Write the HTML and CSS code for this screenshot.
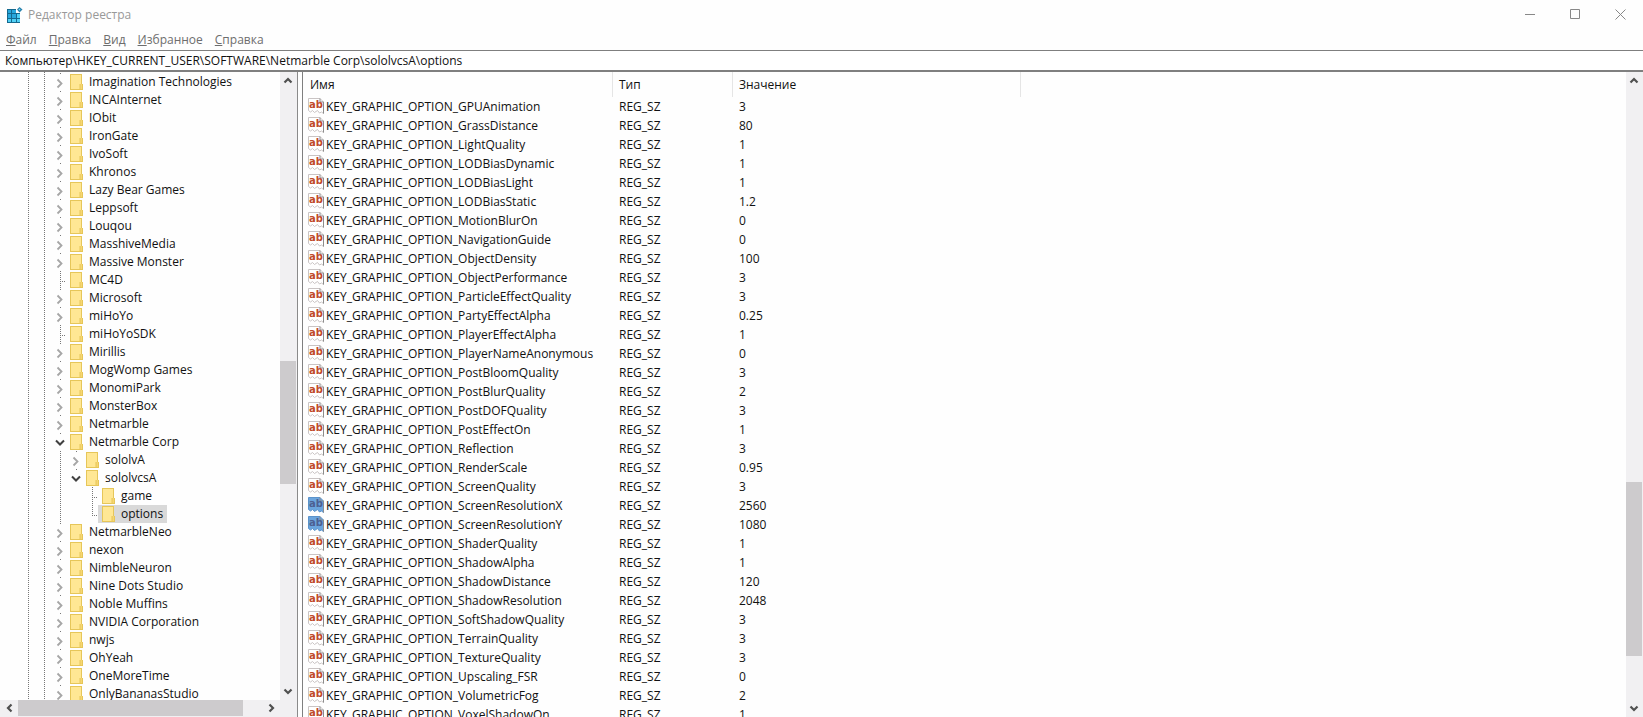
FILE: index.html
```html
<!DOCTYPE html>
<html lang="ru">
<head>
    <meta charset="UTF-8">
    <meta name="viewport" content="width=device-width, initial-scale=1.0">
    <title>Редактор реестра</title>
    <link rel="stylesheet" href="styles.css">
</head>
<body>
<svg class="symbols" aria-hidden="true">
    <symbol id="folder" viewBox="0 0 13 16">
        <path d="M0 0h12v10h1v6H0z" fill="#e6c659"/>
        <path d="M1 1h10v14H1z" fill="#ffe794"/>
        <path d="M10 10h2v5h-2z" fill="#f6d673"/>
        <path d="M10 10v5" stroke="#e6c659"/>
    </symbol>
    <symbol id="right" viewBox="0 0 12 18">
        <path d="M3.500 6.500l4 4-4 4" fill="none" stroke="#a6a6a6" stroke-width="1.800"/>
    </symbol>
    <symbol id="down" viewBox="0 0 12 18">
        <path d="M2 7.500l4 4 4-4" fill="none" stroke="#404040" stroke-width="2"/>
    </symbol>
    <symbol id="arrow" viewBox="0 0 16 17">
        <path d="M4.500 10.500L8 7l3.500 3.500" fill="none" stroke="#505050" stroke-width="2.200"/>
    </symbol>
    <symbol id="string" viewBox="0 0 16 16">
        <path class="page" d="M.5.500h11.500l3.500 3.500v11.500l-2-1.500-2 1-2-2.500-3 2-2-2-2 1.500-2-1.500z"/>
        <path class="fold" d="M12 .5v3.500h3.500v11.500"/>
        <text x="8" y="10" text-anchor="middle">ab</text>
    </symbol>
</svg>

<header>
    <div class="titlebar">
        <svg class="logo" viewBox="0 0 16 16" aria-hidden="true">
            <path d="M0 2h9v4h4v10H0z" fill="#14698f"/>
            <path d="M1 3h3v3H1zM5 3h4v3H5zM1 7h3v4H1zM5 7h4v4H5z" fill="#28a8dd"/>
            <path d="M10 7h3v4h-3zM1 12h3v3H1zM5 12h4v3H5zM10 12h3v3h-3z" fill="#50d0f5"/>
            <path d="M12.500 0l3 2.500-3 3-2.500-3z" fill="#2781ac"/>
            <path d="M12.500 1.500l1 1-1 1-1-1z" fill="#7bdcf7"/>
        </svg>
        <span class="title">Редактор реестра</span>
        <div class="window-buttons">
            <button type="button" aria-label="Свернуть"><svg viewBox="0 0 11 11"><path d="M0 5.500h10"/></svg></button>
            <button type="button" aria-label="Развернуть"><svg viewBox="0 0 11 11"><path d="M.5.500h9v9h-9z"/></svg></button>
            <button type="button" aria-label="Закрыть"><svg viewBox="0 0 11 11"><path d="M.5.500l10 10M10.500.500l-10 10"/></svg></button>
        </div>
    </div>
    <nav class="menu">
        <button type="button"><u>Ф</u>айл</button>
        <button type="button"><u>П</u>равка</button>
        <button type="button"><u>В</u>ид</button>
        <button type="button"><u>И</u>збранное</button>
        <button type="button"><u>С</u>правка</button>
    </nav>
    <input class="address" type="text" aria-label="Адрес" value="Компьютер\HKEY_CURRENT_USER\SOFTWARE\Netmarble Corp\sololvcsA\options">
</header>

<main>
    <aside>
        <div class="tree-area">
            <ul class="tree">
                <li><div class="row"><button class="toggle" aria-label="Развернуть"><svg><use href="#right"/></svg></button><span class="key"><svg><use href="#folder"/></svg>Imagination Technologies</span></div></li>
                <li><div class="row"><button class="toggle" aria-label="Развернуть"><svg><use href="#right"/></svg></button><span class="key"><svg><use href="#folder"/></svg>INCAInternet</span></div></li>
                <li><div class="row"><button class="toggle" aria-label="Развернуть"><svg><use href="#right"/></svg></button><span class="key"><svg><use href="#folder"/></svg>IObit</span></div></li>
                <li><div class="row"><button class="toggle" aria-label="Развернуть"><svg><use href="#right"/></svg></button><span class="key"><svg><use href="#folder"/></svg>IronGate</span></div></li>
                <li><div class="row"><button class="toggle" aria-label="Развернуть"><svg><use href="#right"/></svg></button><span class="key"><svg><use href="#folder"/></svg>IvoSoft</span></div></li>
                <li><div class="row"><button class="toggle" aria-label="Развернуть"><svg><use href="#right"/></svg></button><span class="key"><svg><use href="#folder"/></svg>Khronos</span></div></li>
                <li><div class="row"><button class="toggle" aria-label="Развернуть"><svg><use href="#right"/></svg></button><span class="key"><svg><use href="#folder"/></svg>Lazy Bear Games</span></div></li>
                <li><div class="row"><button class="toggle" aria-label="Развернуть"><svg><use href="#right"/></svg></button><span class="key"><svg><use href="#folder"/></svg>Leppsoft</span></div></li>
                <li><div class="row"><button class="toggle" aria-label="Развернуть"><svg><use href="#right"/></svg></button><span class="key"><svg><use href="#folder"/></svg>Louqou</span></div></li>
                <li><div class="row"><button class="toggle" aria-label="Развернуть"><svg><use href="#right"/></svg></button><span class="key"><svg><use href="#folder"/></svg>MasshiveMedia</span></div></li>
                <li><div class="row"><button class="toggle" aria-label="Развернуть"><svg><use href="#right"/></svg></button><span class="key"><svg><use href="#folder"/></svg>Massive Monster</span></div></li>
                <li><div class="row"><span class="leaf"></span><span class="key"><svg><use href="#folder"/></svg>MC4D</span></div></li>
                <li><div class="row"><button class="toggle" aria-label="Развернуть"><svg><use href="#right"/></svg></button><span class="key"><svg><use href="#folder"/></svg>Microsoft</span></div></li>
                <li><div class="row"><button class="toggle" aria-label="Развернуть"><svg><use href="#right"/></svg></button><span class="key"><svg><use href="#folder"/></svg>miHoYo</span></div></li>
                <li><div class="row"><span class="leaf"></span><span class="key"><svg><use href="#folder"/></svg>miHoYoSDK</span></div></li>
                <li><div class="row"><button class="toggle" aria-label="Развернуть"><svg><use href="#right"/></svg></button><span class="key"><svg><use href="#folder"/></svg>Mirillis</span></div></li>
                <li><div class="row"><button class="toggle" aria-label="Развернуть"><svg><use href="#right"/></svg></button><span class="key"><svg><use href="#folder"/></svg>MogWomp Games</span></div></li>
                <li><div class="row"><button class="toggle" aria-label="Развернуть"><svg><use href="#right"/></svg></button><span class="key"><svg><use href="#folder"/></svg>MonomiPark</span></div></li>
                <li><div class="row"><button class="toggle" aria-label="Развернуть"><svg><use href="#right"/></svg></button><span class="key"><svg><use href="#folder"/></svg>MonsterBox</span></div></li>
                <li><div class="row"><button class="toggle" aria-label="Развернуть"><svg><use href="#right"/></svg></button><span class="key"><svg><use href="#folder"/></svg>Netmarble</span></div></li>
                <li>
                    <div class="row"><button class="toggle" aria-label="Свернуть"><svg><use href="#down"/></svg></button><span class="key"><svg><use href="#folder"/></svg>Netmarble Corp</span></div>
                    <ul class="line">
                        <li><div class="row"><button class="toggle" aria-label="Развернуть"><svg><use href="#right"/></svg></button><span class="key"><svg><use href="#folder"/></svg>sololvA</span></div></li>
                        <li>
                            <div class="row"><button class="toggle" aria-label="Свернуть"><svg><use href="#down"/></svg></button><span class="key"><svg><use href="#folder"/></svg>sololvcsA</span></div>
                            <ul>
                                <li><div class="row"><span class="leaf"></span><span class="key"><svg><use href="#folder"/></svg>game</span></div></li>
                                <li><div class="row"><span class="leaf last"></span><span class="key selected"><svg><use href="#folder"/></svg>options</span></div></li>
                            </ul>
                        </li>
                    </ul>
                </li>
                <li><div class="row"><button class="toggle" aria-label="Развернуть"><svg><use href="#right"/></svg></button><span class="key"><svg><use href="#folder"/></svg>NetmarbleNeo</span></div></li>
                <li><div class="row"><button class="toggle" aria-label="Развернуть"><svg><use href="#right"/></svg></button><span class="key"><svg><use href="#folder"/></svg>nexon</span></div></li>
                <li><div class="row"><button class="toggle" aria-label="Развернуть"><svg><use href="#right"/></svg></button><span class="key"><svg><use href="#folder"/></svg>NimbleNeuron</span></div></li>
                <li><div class="row"><button class="toggle" aria-label="Развернуть"><svg><use href="#right"/></svg></button><span class="key"><svg><use href="#folder"/></svg>Nine Dots Studio</span></div></li>
                <li><div class="row"><button class="toggle" aria-label="Развернуть"><svg><use href="#right"/></svg></button><span class="key"><svg><use href="#folder"/></svg>Noble Muffins</span></div></li>
                <li><div class="row"><button class="toggle" aria-label="Развернуть"><svg><use href="#right"/></svg></button><span class="key"><svg><use href="#folder"/></svg>NVIDIA Corporation</span></div></li>
                <li><div class="row"><button class="toggle" aria-label="Развернуть"><svg><use href="#right"/></svg></button><span class="key"><svg><use href="#folder"/></svg>nwjs</span></div></li>
                <li><div class="row"><button class="toggle" aria-label="Развернуть"><svg><use href="#right"/></svg></button><span class="key"><svg><use href="#folder"/></svg>OhYeah</span></div></li>
                <li><div class="row"><button class="toggle" aria-label="Развернуть"><svg><use href="#right"/></svg></button><span class="key"><svg><use href="#folder"/></svg>OneMoreTime</span></div></li>
                <li><div class="row"><button class="toggle" aria-label="Развернуть"><svg><use href="#right"/></svg></button><span class="key"><svg><use href="#folder"/></svg>OnlyBananasStudio</span></div></li>
            </ul>
            <div class="scrollbar tree-scroll">
                <button type="button" aria-label="Вверх"><svg><use href="#arrow"/></svg></button>
                <div class="before"></div>
                <div class="thumb"></div>
                <div class="after"></div>
                <button type="button" class="to-down" aria-label="Вниз"><svg><use href="#arrow"/></svg></button>
            </div>
        </div>
        <div class="scrollbar horizontal">
            <button type="button" class="to-left" aria-label="Влево"><svg><use href="#arrow"/></svg></button>
            <div class="before"></div>
            <div class="thumb"></div>
            <div class="after"></div>
            <button type="button" class="to-right" aria-label="Вправо"><svg><use href="#arrow"/></svg></button>
        </div>
    </aside>

    <section class="values">
        <div class="list">
            <table>
                <thead>
                    <tr><th class="name">Имя</th><th class="type">Тип</th><th class="data">Значение</th><th></th></tr>
                </thead>
                <tbody>
                    <tr><td><svg><use href="#string"/></svg>KEY_GRAPHIC_OPTION_GPUAnimation</td><td>REG_SZ</td><td>3</td></tr>
                    <tr><td><svg><use href="#string"/></svg>KEY_GRAPHIC_OPTION_GrassDistance</td><td>REG_SZ</td><td>80</td></tr>
                    <tr><td><svg><use href="#string"/></svg>KEY_GRAPHIC_OPTION_LightQuality</td><td>REG_SZ</td><td>1</td></tr>
                    <tr><td><svg><use href="#string"/></svg>KEY_GRAPHIC_OPTION_LODBiasDynamic</td><td>REG_SZ</td><td>1</td></tr>
                    <tr><td><svg><use href="#string"/></svg>KEY_GRAPHIC_OPTION_LODBiasLight</td><td>REG_SZ</td><td>1</td></tr>
                    <tr><td><svg><use href="#string"/></svg>KEY_GRAPHIC_OPTION_LODBiasStatic</td><td>REG_SZ</td><td>1.2</td></tr>
                    <tr><td><svg><use href="#string"/></svg>KEY_GRAPHIC_OPTION_MotionBlurOn</td><td>REG_SZ</td><td>0</td></tr>
                    <tr><td><svg><use href="#string"/></svg>KEY_GRAPHIC_OPTION_NavigationGuide</td><td>REG_SZ</td><td>0</td></tr>
                    <tr><td><svg><use href="#string"/></svg>KEY_GRAPHIC_OPTION_ObjectDensity</td><td>REG_SZ</td><td>100</td></tr>
                    <tr><td><svg><use href="#string"/></svg>KEY_GRAPHIC_OPTION_ObjectPerformance</td><td>REG_SZ</td><td>3</td></tr>
                    <tr><td><svg><use href="#string"/></svg>KEY_GRAPHIC_OPTION_ParticleEffectQuality</td><td>REG_SZ</td><td>3</td></tr>
                    <tr><td><svg><use href="#string"/></svg>KEY_GRAPHIC_OPTION_PartyEffectAlpha</td><td>REG_SZ</td><td>0.25</td></tr>
                    <tr><td><svg><use href="#string"/></svg>KEY_GRAPHIC_OPTION_PlayerEffectAlpha</td><td>REG_SZ</td><td>1</td></tr>
                    <tr><td><svg><use href="#string"/></svg>KEY_GRAPHIC_OPTION_PlayerNameAnonymous</td><td>REG_SZ</td><td>0</td></tr>
                    <tr><td><svg><use href="#string"/></svg>KEY_GRAPHIC_OPTION_PostBloomQuality</td><td>REG_SZ</td><td>3</td></tr>
                    <tr><td><svg><use href="#string"/></svg>KEY_GRAPHIC_OPTION_PostBlurQuality</td><td>REG_SZ</td><td>2</td></tr>
                    <tr><td><svg><use href="#string"/></svg>KEY_GRAPHIC_OPTION_PostDOFQuality</td><td>REG_SZ</td><td>3</td></tr>
                    <tr><td><svg><use href="#string"/></svg>KEY_GRAPHIC_OPTION_PostEffectOn</td><td>REG_SZ</td><td>1</td></tr>
                    <tr><td><svg><use href="#string"/></svg>KEY_GRAPHIC_OPTION_Reflection</td><td>REG_SZ</td><td>3</td></tr>
                    <tr><td><svg><use href="#string"/></svg>KEY_GRAPHIC_OPTION_RenderScale</td><td>REG_SZ</td><td>0.95</td></tr>
                    <tr><td><svg><use href="#string"/></svg>KEY_GRAPHIC_OPTION_ScreenQuality</td><td>REG_SZ</td><td>3</td></tr>
                    <tr class="marked"><td><svg><use href="#string"/></svg>KEY_GRAPHIC_OPTION_ScreenResolutionX</td><td>REG_SZ</td><td>2560</td></tr>
                    <tr class="marked"><td><svg><use href="#string"/></svg>KEY_GRAPHIC_OPTION_ScreenResolutionY</td><td>REG_SZ</td><td>1080</td></tr>
                    <tr><td><svg><use href="#string"/></svg>KEY_GRAPHIC_OPTION_ShaderQuality</td><td>REG_SZ</td><td>1</td></tr>
                    <tr><td><svg><use href="#string"/></svg>KEY_GRAPHIC_OPTION_ShadowAlpha</td><td>REG_SZ</td><td>1</td></tr>
                    <tr><td><svg><use href="#string"/></svg>KEY_GRAPHIC_OPTION_ShadowDistance</td><td>REG_SZ</td><td>120</td></tr>
                    <tr><td><svg><use href="#string"/></svg>KEY_GRAPHIC_OPTION_ShadowResolution</td><td>REG_SZ</td><td>2048</td></tr>
                    <tr><td><svg><use href="#string"/></svg>KEY_GRAPHIC_OPTION_SoftShadowQuality</td><td>REG_SZ</td><td>3</td></tr>
                    <tr><td><svg><use href="#string"/></svg>KEY_GRAPHIC_OPTION_TerrainQuality</td><td>REG_SZ</td><td>3</td></tr>
                    <tr><td><svg><use href="#string"/></svg>KEY_GRAPHIC_OPTION_TextureQuality</td><td>REG_SZ</td><td>3</td></tr>
                    <tr><td><svg><use href="#string"/></svg>KEY_GRAPHIC_OPTION_Upscaling_FSR</td><td>REG_SZ</td><td>0</td></tr>
                    <tr><td><svg><use href="#string"/></svg>KEY_GRAPHIC_OPTION_VolumetricFog</td><td>REG_SZ</td><td>2</td></tr>
                    <tr><td><svg><use href="#string"/></svg>KEY_GRAPHIC_OPTION_VoxelShadowOn</td><td>REG_SZ</td><td>1</td></tr>
                </tbody>
            </table>
        </div>
        <div class="scrollbar list-scroll">
            <button type="button" aria-label="Вверх"><svg><use href="#arrow"/></svg></button>
            <div class="before"></div>
            <div class="thumb"></div>
            <div class="after"></div>
            <button type="button" class="to-down" aria-label="Вниз"><svg><use href="#arrow"/></svg></button>
        </div>
    </section>
</main>
</body>
</html>
```

FILE: styles.css
```css
* {
    box-sizing: border-box;
}
body {
    margin: 0;
    height: 100vh;
    display: flex;
    flex-direction: column;
    overflow: hidden;
    background-color: #fefefe;
    color: #111;
    font-family: "Open Sans", "Segoe UI", sans-serif;
    font-size: 12px;
}
button {
    padding: 0;
    border: none;
    background: none;
    font: inherit;
    color: inherit;
}
svg {
    display: block;
    flex: none;
}
.symbols {
    display: none;
}

/* window header */
.titlebar {
    display: flex;
    align-items: center;
    height: 29px;
    padding-left: 7px;
    color: #999;
}
.logo {
    width: 16px;
    height: 16px;
}
.title {
    margin-left: 5px;
}
.window-buttons {
    display: flex;
    margin-left: auto;
}
.window-buttons button {
    display: flex;
    justify-content: center;
    width: 45px;
}
.window-buttons svg {
    width: 11px;
    height: 11px;
    fill: none;
    stroke: #888;
}
.menu {
    display: flex;
    align-items: flex-start;
    gap: 12px;
    height: 21px;
    padding: 2px 0 0 6px;
    color: #6d6d6d;
}
.address {
    display: block;
    width: 100%;
    height: 22px;
    padding: 0 5px;
    border: solid #7f7f7f;
    border-width: 1px 0 2px;
    background-color: #fff;
    color: #111;
    font: inherit;
}

main {
    display: flex;
    flex: 1;
    min-height: 0;
}

/* key tree */
aside {
    display: flex;
    flex-direction: column;
    width: 298px;
    border-right: 1px solid #8a8a8a;
}
.tree-area {
    display: flex;
    flex: 1;
    min-height: 0;
}
ul {
    margin: 0;
    padding: 0 0 0 16px;
    list-style: none;
}
.tree {
    flex: 1;
    overflow: hidden;
    padding: 1px 0 0 54px;
    background:
        repeating-linear-gradient(#777 0 1px, transparent 1px 2px) 28px 0 / 1px 100% no-repeat,
        repeating-linear-gradient(#777 0 1px, transparent 1px 2px) 44px 0 / 1px 100% no-repeat;
}
.line {
    background: repeating-linear-gradient(#777 0 1px, transparent 1px 2px) 6px 0 / 1px 100% no-repeat;
}
.row {
    display: flex;
    height: 18px;
}
.toggle, .leaf {
    width: 12px;
    height: 18px;
}
.toggle {
    background: linear-gradient(#777, #777) 6px 0 / 1px 1px no-repeat;
}
.toggle svg {
    width: 12px;
    height: 18px;
}
.leaf {
    background:
        repeating-linear-gradient(#777 0 1px, transparent 1px 2px) 6px 0 / 1px 18px no-repeat,
        repeating-linear-gradient(90deg, #777 0 1px, transparent 1px 2px) 6px 10px / 6px 1px no-repeat;
}
.leaf.last {
    background-size: 1px 10px, 6px 1px;
}
.key {
    display: flex;
    align-items: center;
    gap: 6px;
    padding: 0 4px;
    line-height: 18px;
    white-space: nowrap;
}
.key svg {
    width: 13px;
    height: 16px;
}
.selected {
    background-color: #d9d9d9;
}

/* scrollbars */
.scrollbar {
    display: flex;
    flex-direction: column;
    width: 17px;
    padding-right: 1px;
    background-color: #f1f0f2;
}
.scrollbar svg {
    width: 16px;
    height: 17px;
}
.thumb {
    background-color: #cdcbcd;
}
.to-down {
    transform: rotate(180deg);
}
.to-left {
    transform: rotate(-90deg);
}
.to-right {
    transform: rotate(90deg);
}
.tree-scroll .before {
    flex: 272;
}
.tree-scroll .thumb {
    flex: 123;
}
.tree-scroll .after {
    flex: 199;
}
.horizontal {
    flex-direction: row;
    width: auto;
    height: 17px;
    padding: 0 17px 1px 1px;
}
.horizontal .before {
    flex: 1;
}
.horizontal .thumb {
    flex: 224;
}
.horizontal .after {
    flex: 21;
}
.list-scroll .before {
    flex: 393;
}
.list-scroll .thumb {
    flex: 174;
}
.list-scroll .after {
    flex: 44;
}

/* value list */
.values {
    display: flex;
    flex: 1;
    min-width: 0;
    margin-left: 4px;
    border-left: 1px solid #7f7f7f;
}
.list {
    flex: 1;
    min-width: 0;
    overflow: hidden;
}
table {
    width: 100%;
    table-layout: fixed;
    border-collapse: separate;
    border-spacing: 0;
}
th {
    height: 25px;
    padding: 0 6px;
    border-right: 1px solid #e5e5e5;
    font-weight: normal;
    text-align: left;
}
th:last-child {
    border-right: none;
}
.name {
    width: 310px;
    padding-left: 7px;
}
.type {
    width: 120px;
}
.data {
    width: 288px;
}
td {
    height: 19px;
    padding: 0 6px;
    line-height: 19px;
    white-space: nowrap;
}
td:first-child {
    display: flex;
    gap: 2px;
    padding-left: 5px;
}
td svg {
    --paper: #fff;
    --edge: #c9c4c4;
    width: 16px;
    height: 16px;
    margin-top: 1px;
    fill: #c0492b;
    font: bold 10px "DejaVu Sans", sans-serif;
}
.page {
    fill: var(--paper);
    stroke: var(--edge);
}
.fold {
    fill: none;
    stroke: #8c8c8c;
}
.marked svg {
    --paper: #6ba5de;
    --edge: #5b93cb;
    fill: #4d5f92;
}
.marked .fold {
    stroke: #3f78b4;
}
```
